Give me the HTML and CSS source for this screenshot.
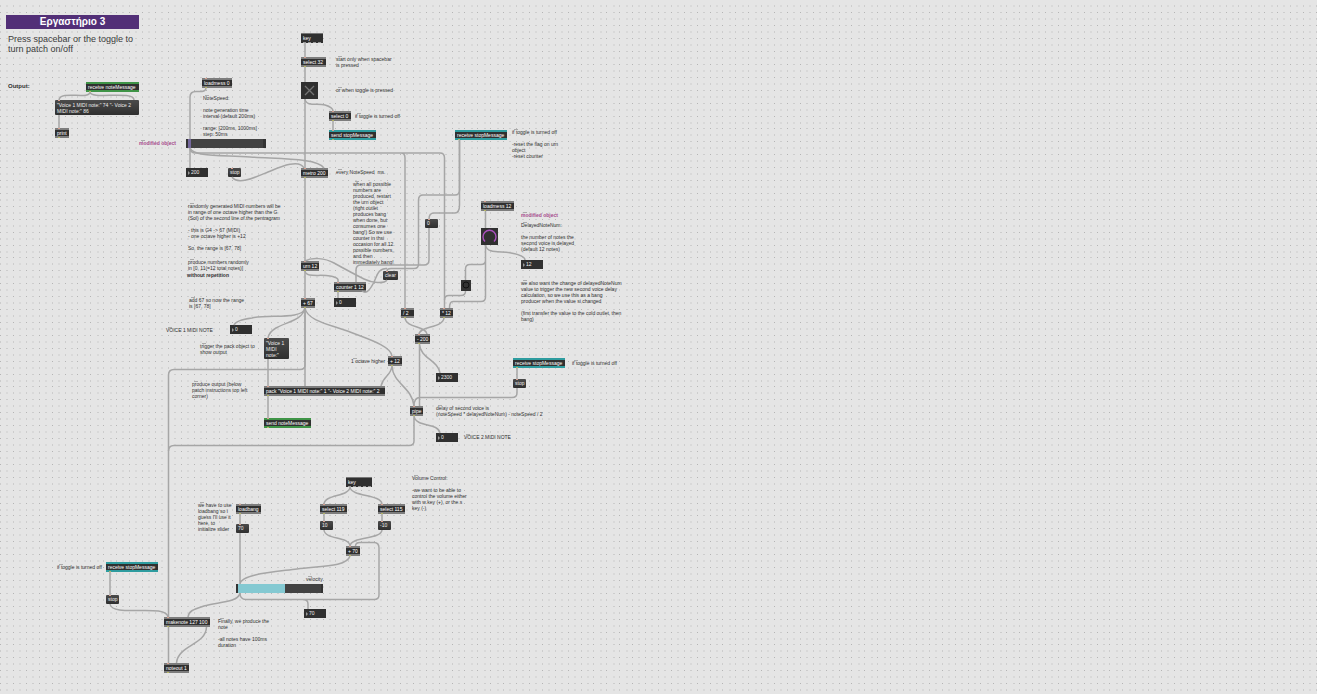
FILE: index.html
```html
<!DOCTYPE html>
<html lang="el">
<head>
<meta charset="utf-8">
<title>Εργαστήριο 3</title>
<link rel="stylesheet" href="styles.css">
</head>
<body>
<main class="patcher">
<svg class="grid" aria-hidden="true">
  <defs>
    <g id="dots">
      <path class="dot-a" stroke-dasharray="1 12 1 12 1 12 1 12 1 12 1 11 1 12 1 12 1 12 1 12" d="M0 .5H129"/>
      <path class="dot-b" stroke-dasharray="2 11 2 11 2 11 2 11 2 11 2 11 2 11 2 11 2 10 2 12" d="M6 .5H129"/>
    </g>
    <g id="soft">
      <path class="dot-b" stroke-dasharray="1 12 1 12 1 12 1 12 1 12 1 11 1 12 1 12 1 12 1 12" d="M0 .5H129M0 1.5H129"/>
      <path class="dot-c" stroke-dasharray="2 11 2 11 2 11 2 11 2 11 2 11 2 11 2 11 2 10 2 12" d="M6 .5H129M6 1.5H129"/>
    </g>
    <pattern id="gridtile" width="129" height="129" patternUnits="userSpaceOnUse">
      <use href="#soft" y="5"/><use href="#dots" y="12"/><use href="#soft" y="18"/><use href="#dots" y="25"/>
      <use href="#soft" y="31"/><use href="#dots" y="38"/><use href="#soft" y="44"/><use href="#dots" y="51"/>
      <use href="#soft" y="57"/><use href="#dots" y="64"/><use href="#soft" y="70"/><use href="#dots" y="77"/>
      <use href="#soft" y="83"/><use href="#dots" y="90"/><use href="#soft" y="96"/><use href="#dots" y="103"/>
      <use href="#soft" y="109"/><use href="#dots" y="116"/><use href="#soft" y="122"/><use href="#dots" y="128"/>
    </pattern>
  </defs>
  <rect width="100%" height="100%" fill="url(#gridtile)"/>
</svg>

<h1 class="title">Εργαστήριο 3</h1>
<p class="intro">Press spacebar or the toggle to<br>turn patch on/off</p>
<p class="note strong output-label">Output:</p>

<p class="note c-space">start only when spacebar<br>is pressed</p>
<p class="note c-toggle">or when toggle is pressed</p>
<p class="note c-off1">if toggle is turned off</p>
<p class="note c-speed">NoteSpeed:<br><br>note generation time<br>interval (default 200ms)<br><br>range: [200ms, 1000ms]<br>step: 50ms</p>
<p class="note pink c-mod1">modified object</p>
<p class="note c-every">every NoteSpeed&nbsp; ms.</p>
<p class="note c-when">when all possible<br>numbers are<br>produced, restart<br>the urn object<br>(right outlet<br>produces bang<br>when done, but<br>consumes one<br>bang!) So we use<br>counter in thsi<br>occasion for all 12<br>possible numbers,<br>and then<br>immediately bang!</p>
<p class="note c-off2">if toggle is turned off<br><br>-reset the flag on urn<br>object<br>-reset counter</p>
<p class="note pink c-mod2">modified object</p>
<p class="note c-delayed">DelayedNoteNum:<br><br>the number of notes the<br>second voice is delayed<br>(default 12 notes)</p>
<p class="note c-also">we also want the change of delayedNoteNum<br>value to trigger the new second voice delay<br>calculation, so we use this as a bang<br>producer when the value si changed<br><br>(first transfer the value to the cold outlet, then<br>bang)</p>
<p class="note c-random">randomly generated MIDI numbers will be<br>in range of one octave higher than the G<br>(Sol) of the second line of the pentragram<br><br>- this is G4 -&gt; 67 (MIDI)<br>- one octave higher is +12<br><br>So, the range is [67, 78]</p>
<p class="note c-produce">produce numbers randomly<br>in [0, 11(=12 total notes)]</p>
<p class="note strong c-norep">without repetition</p>
<p class="note c-add">add 67 so now the range<br>is [67, 78]</p>
<p class="note c-voice1">VOICE 1 MIDI NOTE</p>
<p class="note c-trigger">trigger the pack object to<br>show output</p>
<p class="note c-octave">1 octave higher</p>
<p class="note c-out">produce output (below<br>patch instructions top left<br>corner)</p>
<p class="note c-off3">if toggle is turned off</p>
<p class="note c-delay">delay of second voice is<br>(noteSpeed * delayedNoteNum) - noteSpeed / 2</p>
<p class="note c-voice2">VOICE 2 MIDI NOTE</p>
<p class="note c-volume">Volume Control:<br><br>-we want to be able to<br>control the volume either<br>with w key (+), or the s<br>key (-)</p>
<p class="note c-loadbang">we have to use<br>loadbang so i<br>guess I'll use it<br>here, to<br>initialize slider</p>
<label class="note c-velocity" for="velocity">velocity</label>
<p class="note c-finally">Finally, we produce the<br>note<br><br>-all notes have 100ms<br>duration</p>
<p class="note c-off4">if toggle is turned off</p>

<div class="obj green recv n-recvnote">receive noteMessage</div>
<button class="msg n-voices">"Voice 1 MIDI note:" 74 "- Voice 2<br>MIDI note:" 86</button>
<div class="obj n-print">print</div>
<div class="obj n-loadmess0">loadmess 0</div>
<input class="slider speed" type="range" min="200" max="1000" step="50" value="200" aria-label="NoteSpeed">
<label class="num n-200"><input type="text" value="200" aria-label="Note speed value"></label>
<button class="msg n-stop1">stop</button>
<div class="obj keyobj n-key1">key</div>
<div class="obj n-sel32">select 32</div>
<label class="toggle"><input type="checkbox" aria-label="Patch on/off"><svg viewBox="0 0 17 17"><path d="M4 4L13 13M13 4L4 13"/></svg></label>
<div class="obj n-sel0">select 0</div>
<div class="obj teal n-sendstop">send stopMessage</div>
<div class="obj n-metro">metro 200</div>
<div class="obj teal recv n-recv1">receive stopMessage</div>
<button class="msg n-zero">0</button>
<div class="obj n-loadmess12">loadmess 12</div>
<button class="dial" aria-label="DelayedNoteNum"><svg viewBox="0 0 17 17"><path d="M4 13.500A6.500 6.500 0 1 1 13 13.500"/></svg></button>
<label class="num n-12"><input type="text" value="12" aria-label="Delayed note count"></label>
<button class="bang" aria-label="Bang"><svg viewBox="0 0 10 11"><circle cx="5" cy="5" r="3"/></svg></button>
<div class="obj n-urn">urn 12</div>
<button class="msg n-clear">clear</button>
<div class="obj n-counter">counter 1 12</div>
<label class="num n-count0"><input type="text" value="0" aria-label="Counter"></label>
<div class="obj n-add67">+ 67</div>
<div class="obj n-div2">/ 2</div>
<div class="obj n-mul12">* 12</div>
<div class="obj n-sub200">- 200</div>
<label class="num n-2300"><input type="text" value="2300" aria-label="Delay"></label>
<label class="num n-voice1"><input type="text" value="0" aria-label="Voice 1 MIDI note"></label>
<button class="msg n-voice1msg">"Voice 1<br>MIDI<br>note:"</button>
<div class="obj n-add12">+ 12</div>
<div class="obj n-pack">pack "Voice 1 MIDI note:" 1 "- Voice 2 MIDI note:" 2</div>
<div class="obj green n-sendnote">send noteMessage</div>
<div class="obj teal recv n-recv2">receive stopMessage</div>
<button class="msg n-stop2">stop</button>
<div class="obj n-pipe">pipe</div>
<label class="num n-voice2"><input type="text" value="0" aria-label="Voice 2 MIDI note"></label>
<div class="obj keyobj n-key2">key</div>
<div class="obj n-sel119">select 119</div>
<div class="obj n-sel115">select 115</div>
<button class="msg n-plus10">10</button>
<button class="msg n-minus10">-10</button>
<div class="obj n-add70">+ 70</div>
<div class="obj n-loadbang">loadbang</div>
<button class="msg n-70">70</button>
<input id="velocity" class="slider velocity" type="range" min="0" max="127" value="70">
<label class="num n-vel"><input type="text" value="70" aria-label="Velocity value"></label>
<div class="obj teal recv n-recv3">receive stopMessage</div>
<button class="msg n-stop3">stop</button>
<div class="obj n-makenote">makenote 127 100</div>
<div class="obj n-noteout">noteout 1</div>

<svg class="wires" aria-hidden="true">
  <path d="M90 92C90 100 60 90 59 100M90 92C90 100 134 90 134 100M59 115V128"/>
  <path d="M206 88C206 90 205 91 202 91.500H196Q190 91.500 190 97V139M190 148V168"/>
  <path d="M190 148Q190 153 196 153H401Q405 153 405 158V308M396 153H440Q444.500 153 444.500 158V308"/>
  <path d="M190 148C194 157 220 155 250 157S318 158 324 168M232 177C238 186 258 176 268 172S299 158 304 168"/>
  <path d="M305 43V57M305 67V82M305 99V168M305 178V261M305 271V298M305 308V386"/>
  <path d="M305 99C306 107 318 103 325 105S333 109 333 111M333 121V130"/>
  <path d="M305 271C306 278 320 274 330 276S338 280 338 282M338 292V298M387 280C384 284 372 283 364 279S343 268 334 263S312 257 305 261M362 291C367 295 371 288 374 282S378 268 387 268.500"/>
  <path d="M459.500 140V190Q459.500 195 455 195H423Q418.500 195 418.500 200V264Q418.500 268.500 414 268.500H391Q387 268.500 387 271"/>
  <path d="M459.500 140V205Q459.500 213 455 213H434Q429 213 429 219M429 228V260Q429 265 424 265H361Q356 265 356 270V282"/>
  <path d="M305 308C303 320 268 314 252 318Q236 320 234 325M305 308C303 320 286 322 276 328Q269 332 268 338M305 308C307 321 332 325 350 332S391 346 392 356M268 359V386M268 396V418"/>
  <path d="M305 308V365Q305 369.500 300 369.500H174Q168.500 369.500 168.500 375V617"/>
  <path d="M392 366C391 376 383 376 381 386M392 366C393 384 412 387 414 406"/>
  <path d="M405 318C406 328 426 326 427 334M444 318C443 328 420 326 419 334M419.500 344V406M419.500 344C420 358 438 360 440 373"/>
  <path d="M485.500 211V228M485.500 245V297Q485.500 301.500 481 301.500H453Q449.500 301.500 449.500 308M485.500 245V260Q485.500 264.500 481 264.500H470Q465.500 264.500 465.500 269V280M465.500 291Q465.500 295.500 461 295.500H449Q444.500 295.500 444.500 300"/>
  <path d="M485.500 245C487 254 500 251 511 253S525 257 525 260"/>
  <path d="M517 368V379M517 388V393Q517 397.500 512 397.500H420Q414 397.500 414 406M414 416V441Q414 445.500 409 445.500H174Q168.500 445.500 168.500 451M414 416C416 428 438 422 440 433"/>
  <path d="M350 487C349 497 325 494 324 504M350 487C351 497 381 494 382 504M324 514V521M382 514V521M324 530C325 540 349 536 350 546M382 530C381 540 351 536 350 546"/>
  <path d="M350 556C347 567 320 566 297 569S241 574 240 584M240 514V524M240 533V584M240 593C238 603 216 602 204 606S189 611 188 617"/>
  <path d="M240 593Q240 599.500 246 599.500H303Q308 599.500 308 604V609M300 599.500H374Q379 599.500 379 595V548Q379 542.500 374 542.500H360Q355.500 542.500 355.500 546"/>
  <path d="M110 572V595M110 604C112 618 166 603 168 617M168.500 627V663M206.500 627C206 645 178 645 176.500 663"/>
</svg>
</main>
</body>
</html>
```
FILE: styles.css
```css
* { box-sizing: border-box; }
body { margin: 0; background: #e5e5e5; font-family: "Liberation Sans", Arial, sans-serif; }
button, input { font: inherit; color: inherit; margin: 0; padding: 0; border: 0; border-radius: 0; }

.patcher { position: relative; min-height: 100vh; overflow: hidden; color: #303030; font-size: 5px; line-height: 6px; }
.grid, .wires { position: absolute; inset: 0; width: 100%; height: 100%; }
.wires { pointer-events: none; fill: none; stroke: #a6a6a6; stroke-width: 1.5; }
.dot-a { stroke: #b4b4b4; }
.dot-b { stroke: #cdcdcd; }
.dot-c { stroke: #d9d9d9; }

.title, .intro, .note, .obj, .msg, .num, .toggle, .dial, .bang, .slider { position: absolute; margin: 0; white-space: nowrap; }
.title { left: 6px; top: 15px; width: 133px; background: #522f77; color: #fff; font-size: 10px; line-height: 14px; text-align: center; }
.intro { left: 8px; top: 34px; font-size: 9px; line-height: 10px; color: #3c3c3c; }
.note { background: linear-gradient(#aaa, #aaa) 2px 0 / 4px 1px no-repeat; }
.strong { font-weight: bold; background: none; }
.pink { font-weight: bold; color: #a5478c; }

.obj { height: 10px; padding: 0 2px; color: #fff; line-height: 10px;
  background:
    linear-gradient(#d9a090, #d9a090) 3px 0 / 2px 1px no-repeat,
    linear-gradient(#b5b560, #b5b560) 3px 9px / 2px 1px no-repeat,
    linear-gradient(var(--strip) 2px, #303030 2px, #303030 8px, var(--strip) 8px);
  --strip: #7d7d7d; }
.green { --strip: #3f9447; }
.teal { --strip: #2e9c9f; }
.recv { background:
    linear-gradient(#b5b560, #b5b560) 3px 9px / 2px 1px no-repeat,
    linear-gradient(var(--strip) 2px, #303030 2px, #303030 8px, var(--strip) 8px); }
.keyobj { background:
    repeating-linear-gradient(90deg, #303030 0 2px, #999 2px 5px) 0 9px / 100% 1px no-repeat,
    linear-gradient(#777 1px, #303030 1px); }

.msg { height: 9px; padding: 0 2px; color: #eee; border-radius: 1px; line-height: 9px; text-align: left; background: linear-gradient(90deg, transparent 3px, #d9a090 3px, #d9a090 5px, transparent 5px) 0 0 / 100% 1px no-repeat, linear-gradient(#4b4b4b, #2f2f2f); }
.num { height: 9px; width: 22px; padding-left: 5px; background: #303030; color: #eee; }
.num::before { content: ""; position: absolute; left: 2px; top: 3px; border: solid transparent; border-width: 2px 0 2px 2px; border-left-color: #999; }
.num input { display: block; width: 100%; height: 9px; background: none; line-height: 9px; }

.toggle { left: 301px; top: 82px; width: 17px; height: 17px; background: #303030; }
.toggle input { position: absolute; inset: 0; opacity: 0; }
.toggle svg, .dial svg, .bang svg { display: block; width: 100%; height: 100%; fill: none; }
.toggle svg { stroke: #747474; stroke-width: 1.3; }
.dial { left: 481px; top: 228px; width: 17px; height: 17px; background: #303030; }
.dial svg { stroke: #a94fbd; stroke-width: 1.4; }
.bang { left: 461px; top: 280px; width: 10px; height: 11px; background: #333; }
.bang svg { stroke: #111; }

.slider { appearance: none; height: 9px; }
.slider::-webkit-slider-thumb { appearance: none; width: 1px; height: 9px; background: transparent; }
.speed { left: 186px; top: 139px; width: 80px; background: linear-gradient(90deg, #333 2px, #75689d 2px, #75689d 5px, #424242 5px, #424242 77px, #333 77px); }
.velocity { left: 236px; top: 584px; width: 87px; background: linear-gradient(90deg, #333 2px, #84c9d2 2px, #84c9d2 49px, #424242 49px, #424242 85px, #333 85px); }

/* comments */
.output-label { left: 8px; top: 83px; font-size: 6px; }
.c-space { left: 336px; top: 56px; }
.c-toggle { left: 336px; top: 87px; }
.c-off1 { left: 355px; top: 113px; }
.c-speed { left: 203px; top: 95px; }
.c-mod1 { left: 139px; top: 140px; }
.c-every { left: 336px; top: 169px; }
.c-when { left: 353px; top: 181px; }
.c-off2 { left: 512px; top: 129px; }
.c-mod2 { left: 521px; top: 212px; }
.c-delayed { left: 521px; top: 222px; }
.c-also { left: 521px; top: 280px; }
.c-random { left: 188px; top: 203px; }
.c-produce { left: 188px; top: 259px; }
.c-norep { left: 187px; top: 272px; }
.c-add { left: 189px; top: 297px; }
.c-voice1 { left: 166px; top: 327px; }
.c-trigger { left: 200px; top: 343px; }
.c-octave { left: 351px; top: 358px; }
.c-out { left: 192px; top: 381px; }
.c-off3 { left: 572px; top: 360px; }
.c-delay { left: 436px; top: 405px; }
.c-voice2 { left: 464px; top: 434px; }
.c-volume { left: 412px; top: 475px; }
.c-loadbang { left: 198px; top: 502px; }
.c-velocity { left: 306px; top: 576px; }
.c-finally { left: 218px; top: 618px; }
.c-off4 { left: 57px; top: 564px; }

/* patch objects */
.n-recvnote { left: 86px; top: 82px; width: 53px; }
.n-voices { left: 55px; top: 100px; width: 84px; height: 15px; line-height: 6px; }
.n-print { left: 55px; top: 128px; width: 14px; }
.n-loadmess0 { left: 202px; top: 78px; width: 30px; }
.n-200 { left: 186px; top: 168px; }
.n-stop1 { left: 228px; top: 168px; width: 13px; }
.n-key1 { left: 301px; top: 33px; width: 22px; }
.n-sel32 { left: 301px; top: 57px; width: 25px; }
.n-sel0 { left: 329px; top: 111px; width: 22px; }
.n-sendstop { left: 329px; top: 130px; width: 47px; }
.n-metro { left: 301px; top: 168px; width: 27px; }
.n-recv1 { left: 455px; top: 130px; width: 52px; }
.n-zero { left: 425px; top: 219px; width: 13px; }
.n-loadmess12 { left: 481px; top: 201px; width: 33px; }
.n-12 { left: 521px; top: 260px; }
.n-urn { left: 301px; top: 261px; width: 18px; }
.n-clear { left: 383px; top: 271px; width: 15px; }
.n-counter { left: 334px; top: 282px; width: 32px; }
.n-count0 { left: 334px; top: 298px; }
.n-add67 { left: 301px; top: 298px; width: 14px; }
.n-div2 { left: 401px; top: 308px; width: 13px; }
.n-mul12 { left: 440px; top: 308px; width: 13px; }
.n-sub200 { left: 415px; top: 334px; width: 15px; }
.n-2300 { left: 436px; top: 373px; }
.n-voice1 { left: 230px; top: 325px; }
.n-voice1msg { left: 264px; top: 338px; width: 25px; height: 21px; line-height: 6px; }
.n-add12 { left: 388px; top: 356px; width: 14px; }
.n-pack { left: 264px; top: 386px; width: 121px; }
.n-sendnote { left: 264px; top: 418px; width: 47px; }
.n-recv2 { left: 513px; top: 358px; width: 52px; }
.n-stop2 { left: 513px; top: 379px; width: 13px; }
.n-pipe { left: 410px; top: 406px; width: 13px; }
.n-voice2 { left: 436px; top: 433px; }
.n-key2 { left: 346px; top: 477px; width: 26px; }
.n-sel119 { left: 320px; top: 504px; width: 27px; }
.n-sel115 { left: 378px; top: 504px; width: 27px; }
.n-plus10 { left: 320px; top: 521px; width: 13px; }
.n-minus10 { left: 378px; top: 521px; width: 13px; }
.n-add70 { left: 346px; top: 546px; width: 14px; }
.n-loadbang { left: 236px; top: 504px; width: 25px; }
.n-70 { left: 236px; top: 524px; width: 13px; }
.n-vel { left: 304px; top: 609px; }
.n-recv3 { left: 106px; top: 562px; width: 52px; }
.n-stop3 { left: 106px; top: 595px; width: 13px; }
.n-makenote { left: 164px; top: 617px; width: 46px; }
.n-noteout { left: 164px; top: 663px; width: 25px; }
```
